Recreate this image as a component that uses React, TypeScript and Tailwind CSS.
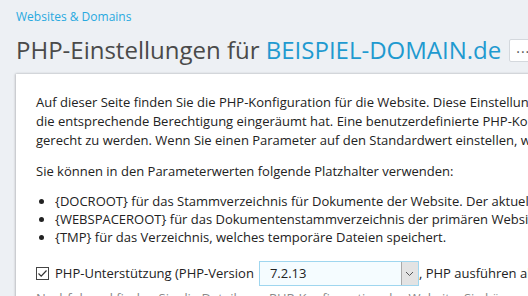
import React from "react";

export default function App() {
  const font = { fontFamily: '"Open Sans", "Noto Sans", sans-serif' };
  return (
    <div
      className="h-[296px] w-[528px] overflow-hidden bg-[#edf0f4] pl-[16px] text-[#222]"
      style={font}
    >
      <div className="pt-[8px] text-[12px] leading-[18px] text-[#28a9df] whitespace-nowrap">
        Websites &amp; Domains
      </div>
      <div className="mt-[8px] flex items-center whitespace-nowrap">
        <h1 className="text-[24px] leading-[32px] font-normal text-[#4a4a4a] tracking-[0px]">
          PHP-Einstellungen für{" "}
          <span className="text-[#1f9ad0]">BEISPIEL-DOMAIN.de</span>
        </h1>
        <div className="ml-[8px] flex h-[23px] w-[40px] shrink-0 items-center rounded-[2px] border border-[#d4d8dd] bg-white pl-[6px] text-[14px] leading-[14px] text-[#555]">
          <span className="-mt-[4px] tracking-[1px]">...</span>
        </div>
      </div>
      <div className="mt-[8px] w-[900px] bg-white pl-[20px] pt-[19px] pb-[20px] shadow-[-1px_0_2px_rgba(0,0,0,0.18),0_-1px_2px_rgba(0,0,0,0.08)] text-[13px] leading-[19px]">
        <div className="whitespace-nowrap">
          <div>
            Auf dieser Seite finden Sie die PHP-Konfiguration für die Website. Diese Einstellungen können nur geändert werden, wenn Ihr Provider Ihnen
          </div>
          <div>
            die entsprechende Berechtigung eingeräumt hat. Eine benutzerdefinierte PHP-Konfiguration kann erforderlich sein, um den Anforderungen
          </div>
          <div>
            gerecht zu werden. Wenn Sie einen Parameter auf den Standardwert einstellen, wird der Wert aus der Serverkonfiguration verwendet.
          </div>
        </div>
        <div className="mt-[12px] whitespace-nowrap">
          Sie können in den Parameterwerten folgende Platzhalter verwenden:
        </div>
        <ul className="mt-[11px] list-disc pl-[19px] whitespace-nowrap leading-[18px]">
          <li>{"{DOCROOT}"} für das Stammverzeichnis für Dokumente der Website. Der aktuelle Wert ist /var/www/vhosts/beispiel-domain.de/httpdocs</li>
          <li>{"{WEBSPACEROOT}"} für das Dokumentenstammverzeichnis der primären Website des Webspace.</li>
          <li>{"{TMP}"} für das Verzeichnis, welches temporäre Dateien speichert.</li>
        </ul>
        <div className="mt-[15px] flex items-center whitespace-nowrap">
          <span className="relative flex h-[13px] w-[13px] shrink-0 items-center justify-center border border-[#444] bg-white">
            <svg width="11" height="11" viewBox="0 0 11 11" className="absolute left-[0px] top-[0px]">
              <path d="M1.5 5.5 L4.2 8.2 L9.5 2.5" fill="none" stroke="#333" strokeWidth="1.2" />
            </svg>
          </span>
          <span className="ml-[6px]">PHP-Unterstützung (PHP-Version</span>
          <div className="ml-[5px] flex h-[25px] w-[160px] items-center border border-[#9fd6ef] bg-[#f5fcff]">
            <span className="flex-1 pl-[10px]">7.2.13</span>
            <span className="flex h-[23px] w-[17px] items-center justify-center border-l border-[#a9a9a9] bg-[#e3e3e3]">
              <svg width="9" height="6" viewBox="0 0 9 6">
                <path d="M1 1 L4.5 4.5 L8 1" fill="none" stroke="#555" strokeWidth="1" />
              </svg>
            </span>
          </div>
          <span>, PHP ausführen als FastCGI-Anwendung von Apache</span>
        </div>
        <div className="mt-[3px] whitespace-nowrap text-[#8a8a8a]">
          Nachfolgend finden Sie die Details zur PHP-Konfiguration der Website. Sie können die Einstellungen anpassen.
        </div>
      </div>
    </div>
  );
}
